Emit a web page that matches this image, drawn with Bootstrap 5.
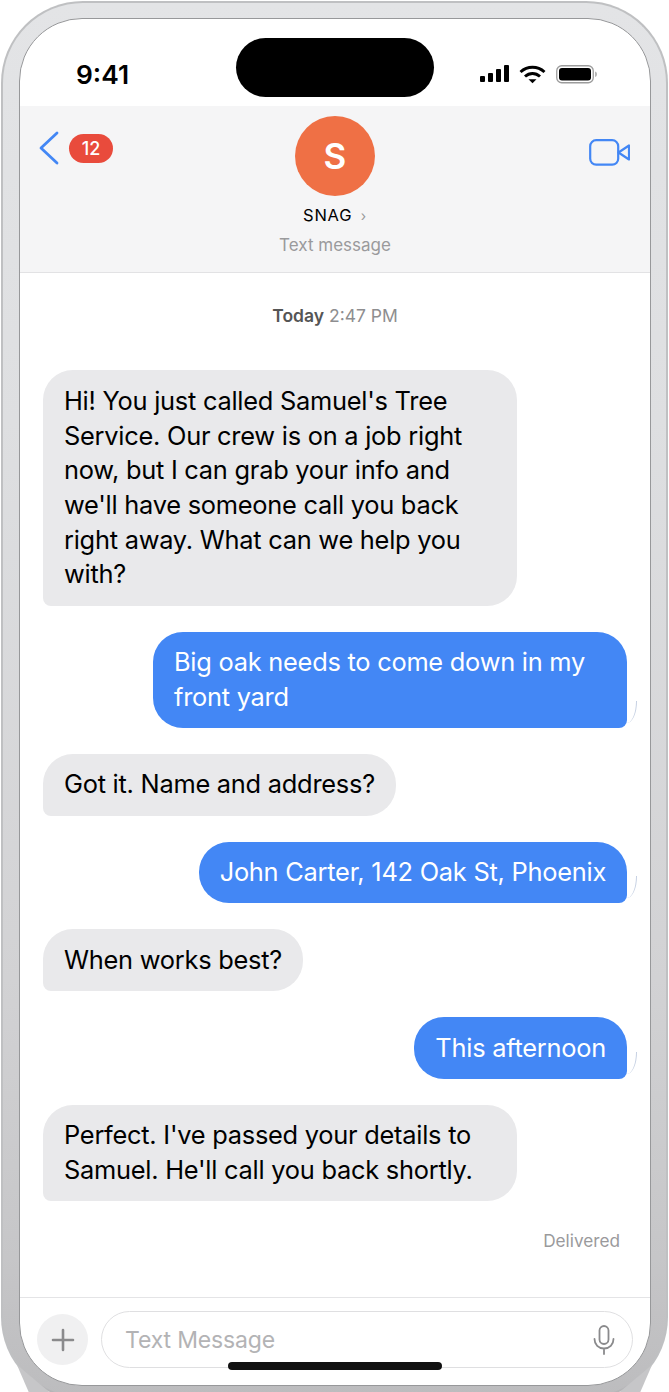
<!DOCTYPE html>
<html lang="en">
<head>
<meta charset="utf-8">
<title>Messages</title>
<link href="https://cdn.jsdelivr.net/npm/bootstrap@5.3.0/dist/css/bootstrap.min.css" rel="stylesheet">
<style>
html,body{height:1392px;background:#fff;overflow:hidden}
body{font-family:Inter,"Liberation Sans",sans-serif;color:#000}
.handset{position:relative;width:667px;height:1398px;margin:1px 0 0 1px;padding:15px 15px 0 16px;border:2px solid #bfc0c2;border-bottom-color:#b5b5b7;border-radius:82px;background:linear-gradient(180deg,#e3e4e6 0,#dedfe1 30%,#d2d2d4 70%,#c6c6c8 90%,#bcbcbe 100%)}
.wedge{position:absolute;top:1362px;width:36px;height:30px;background:#c6c6c8}
.wedge-l{left:14px;clip-path:polygon(0 0,100% 100%,36% 100%)}
.wedge-r{right:14px;clip-path:polygon(100% 0,0 100%,64% 100%)}
.display{position:relative;height:1368px;background:#fff;border:1px solid #97989a;border-radius:63px;overflow:hidden}
.statusbar{height:87px;padding:0 52px 0 56px}
.clock{font-size:26.3px;font-weight:600;line-height:1;margin-top:43px;width:160px}
.island{width:198px;height:59px;margin-top:19px;border-radius:30px;background:#000}
.indicators{margin-top:46px;gap:10px}
.convo-head{height:167px;background:#f5f5f6;border-bottom:1px solid #e2e2e4}
.back-link{left:18px;top:25px}
.unread{left:49px;top:28px;width:44px;height:29px;border-radius:15px;background:#e94b3c;color:#fff;font-size:18px;font-weight:500}
.video-link{right:20px;top:33px}
.avatar-disc{width:80px;height:80px;margin-top:10px;background:#ef7045;color:#fff;font-size:35px;font-weight:600;border-radius:50%}
.who{font-size:16.5px;line-height:20px;margin-top:9px;letter-spacing:.8px;font-weight:400}
.who span{color:#999;font-size:14px;margin-left:3px}
.kind{font-size:17px;line-height:20px;margin-top:9px;color:#9a9a9c}
.stamp{font-size:17.5px;line-height:20px;margin-top:33px;margin-bottom:44.3px;color:#8e8e90}
.stamp b{font-weight:600;color:#555}
.thread{padding:0 23px;gap:26px}
.bubble{font-size:25.4px;line-height:34.7px;letter-spacing:-.25px;padding:13.5px 21px;border-radius:30px;max-width:474px}
.bubble-in{background:#e9e9eb;border-bottom-left-radius:8px;align-self:flex-start}
.bubble-out{position:relative;background:#4387f5;color:#fff;border-bottom-right-radius:8px;align-self:flex-end}
.bubble-out::after{content:"";position:absolute;right:-10px;bottom:5px;width:10px;height:22px;border-right:1px solid #c4cfe2;border-radius:0 0 100% 0}
.wide{width:474px}
.sent-note{font-size:17.2px;line-height:20px;color:#9a9a9c;text-align:right;margin:30px 30px 0 0}
.composer{position:absolute;left:0;right:0;top:1278px;height:90px;border-top:1px solid #e4e4e6;padding:13px 16px 0 17px;gap:13px}
.plus-disc{width:51px;height:51px;border-radius:50%;background:#f0f0f1;margin-top:3px}
.field{width:532px;height:57px;border:1px solid #dfdfe1;border-radius:29px;padding:1px 17px 0 23px;color:#b3b3b5;font-size:23px;letter-spacing:-.15px}
.home-bar{position:absolute;left:208px;top:1343px;width:214px;height:8px;border-radius:4px;background:#111}
</style>
</head>
<body>
<div class="handset">
  <div class="display">
    <div class="statusbar d-flex">
      <div class="clock">9:41</div>
      <div class="island"></div>
      <div class="indicators ms-auto d-flex align-items-start">
        <svg width="29" height="18" viewBox="0 0 29 18" fill="#000"><rect x="0" y="11" width="5" height="6" rx="1"/><rect x="8" y="8" width="5" height="9" rx="1"/><rect x="16" y="4" width="5" height="13" rx="1"/><rect x="24" y="0" width="5" height="17" rx="1"/></svg>
        <svg width="27" height="19" viewBox="0 0 27 19" fill="none" stroke="#000" stroke-width="3"><path d="M1.5 7C8.500.8 18.500.8 25.500 7"/><path d="M6 11.500c4.500-4 10.500-4 15 0"/><path d="M9.500 14.200l4-0 4 0-4 4z" fill="#000" stroke="none"/></svg>
        <svg width="42" height="19" viewBox="0 0 42 19"><rect x=".75" y=".75" width="36.500" height="17" rx="5" fill="none" stroke="#9c9c9c" stroke-width="1.300"/><rect x="3" y="3" width="32" height="12.500" rx="3" fill="#000"/><path d="M39 6.500c1.500.5 2 1.500 2 2.700s-.5 2.300-2 2.800z" fill="#b5b5b5"/></svg>
      </div>
    </div>
    <header class="convo-head position-relative d-flex flex-column align-items-center">
      <svg class="back-link position-absolute" width="22" height="34" viewBox="0 0 22 34" fill="none" stroke="#4387f5" stroke-width="2.800" stroke-linecap="round" stroke-linejoin="round"><path d="M19 2 3 17l16 15"/></svg>
      <span class="unread position-absolute d-flex align-items-center justify-content-center">12</span>
      <svg class="video-link position-absolute" width="41" height="27" viewBox="0 0 41 27" fill="none" stroke="#4387f5" stroke-width="2.200" stroke-linejoin="round"><rect x="1.200" y="1.200" width="28" height="24.500" rx="6"/><path d="M29.500 13.500 40 6.500v14z"/></svg>
      <div class="avatar-disc d-flex align-items-center justify-content-center">S</div>
      <div class="who">SNAG <span>›</span></div>
      <div class="kind">Text message</div>
    </header>
    <div class="stamp text-center"><b>Today</b> 2:47 PM</div>
    <main class="thread d-flex flex-column">
      <div class="bubble bubble-in wide">Hi! You just called Samuel's Tree Service. Our crew is on a job right now, but I can grab your info and we'll have someone call you back right away. What can we help you with?</div>
      <div class="bubble bubble-out wide">Big oak needs to come down in my front yard</div>
      <div class="bubble bubble-in">Got it. Name and address?</div>
      <div class="bubble bubble-out">John Carter, 142 Oak St, Phoenix</div>
      <div class="bubble bubble-in">When works best?</div>
      <div class="bubble bubble-out">This afternoon</div>
      <div class="bubble bubble-in wide">Perfect. I've passed your details to Samuel. He'll call you back shortly.</div>
    </main>
    <div class="sent-note">Delivered</div>
    <footer class="composer d-flex">
      <div class="plus-disc d-flex align-items-center justify-content-center">
        <svg width="24" height="24" viewBox="0 0 24 24" stroke="#8a8a8c" stroke-width="2.600" stroke-linecap="round"><path d="M12 2v20M2 12h20"/></svg>
      </div>
      <div class="field d-flex align-items-center justify-content-between">
        <span>Text Message</span>
        <svg width="22" height="30" viewBox="0 0 22 30" fill="none" stroke="#8a8a8c" stroke-width="1.800" stroke-linecap="round"><rect x="6.500" y="1" width="9" height="18" rx="4.500"/><path d="M1.500 14c0 5.500 4 9.500 9.500 9.500s9.500-4 9.500-9.500M11 23.500V29"/></svg>
      </div>
    </footer>
    <div class="home-bar"></div>
  </div>
  <span class="wedge wedge-l"></span>
  <span class="wedge wedge-r"></span>
</div>
<script src="https://cdn.jsdelivr.net/npm/bootstrap@5.3.0/dist/js/bootstrap.bundle.min.js"></script>
</body>
</html>
